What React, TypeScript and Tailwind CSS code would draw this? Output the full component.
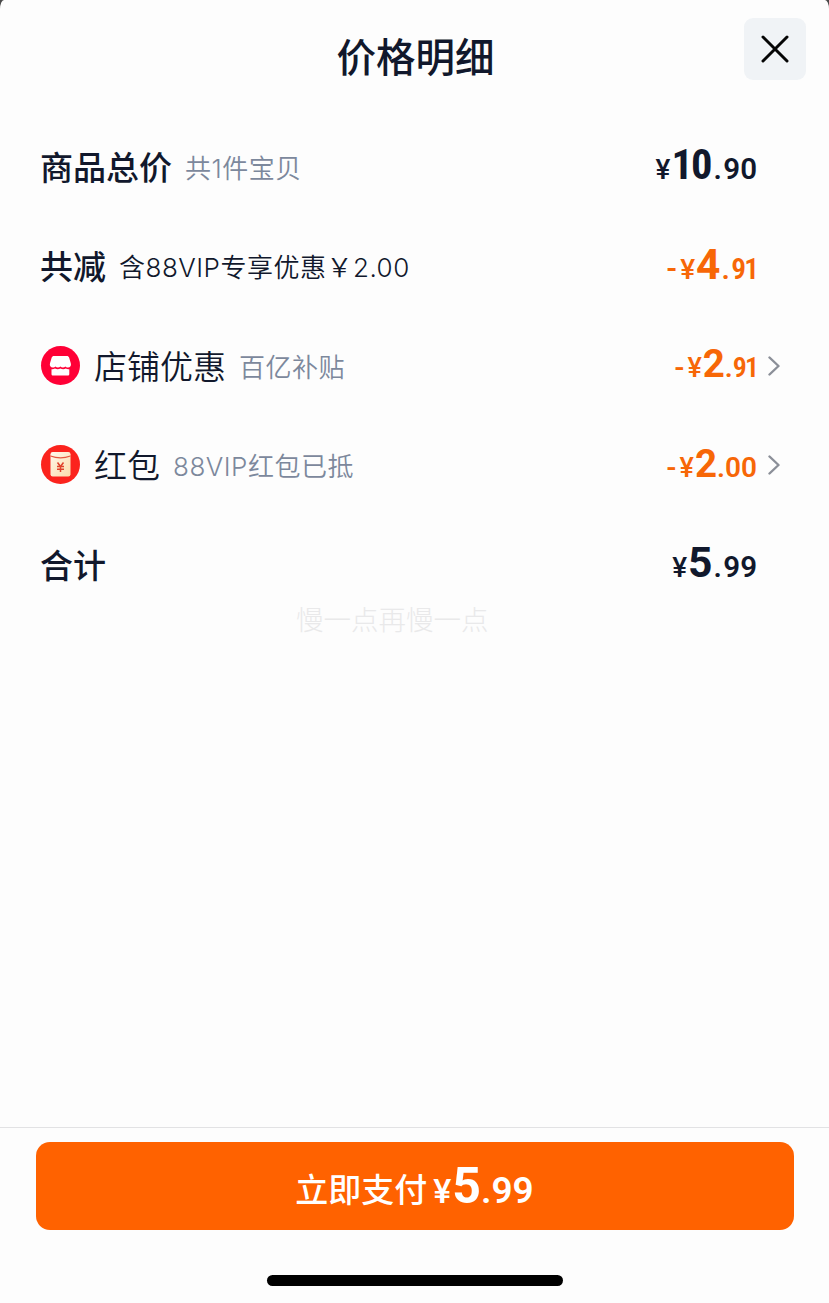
import clsx from "clsx";
import type { ReactNode } from "react";

type Tone = "ink" | "orange";

type PriceProps = {
  yuan: string;
  cents: string;
  negative?: boolean;
  size?: "sm" | "md" | "lg";
};

const SIZES = {
  sm: { yen: "text-[27px] mr-px", yuan: "text-[38.5px]", dot: "", cents: "text-[28px]" },
  md: { yen: "text-[28px] mr-px", yuan: "text-[42.5px]", dot: "ml-px mr-[1.5px]", cents: "text-[29.5px]" },
  lg: { yen: "text-[34px] mr-px", yuan: "text-[50px]", dot: "", cents: "text-[37px]" },
};

function Price({ yuan, cents, negative, size = "md" }: PriceProps) {
  const s = SIZES[size];
  const wide = yuan.startsWith("1");
  const tight = cents.endsWith("1");
  return (
    <span className="flex items-baseline font-[Roboto,sans-serif] leading-none whitespace-nowrap">
      {negative ? <span className={clsx("mr-[3px] font-semibold", s.cents)}>-</span> : null}
      <span className={clsx("font-medium", s.yen)}>¥</span>
      <span className={clsx("font-bold", wide && "mr-[2px] -tracking-[2px] font-stretch-semi-condensed", s.yuan)}>
        {yuan}
      </span>
      <span className={clsx("font-semibold", s.cents, s.dot)}>.</span>
      <span className={clsx("font-semibold", tight && "-tracking-[2px] font-stretch-semi-condensed", s.cents)}>
        {cents}
      </span>
    </span>
  );
}

type RowProps = {
  icon?: ReactNode;
  label: string;
  note?: string;
  noteDark?: boolean;
  bold?: boolean;
  arrow?: boolean;
  tone?: Tone;
  children: ReactNode;
};

function Row({ icon, label, note, noteDark, bold, arrow, tone = "ink", children }: RowProps) {
  return (
    <li className="flex h-[99.5px] items-center pr-12 pl-10">
      {icon ? <span className="mr-[14px] size-10">{icon}</span> : null}
      <span className={clsx("pb-px text-[33px] leading-none", bold ? "font-medium" : "font-[350]")}>{label}</span>
      {note ? (
        <span
          className={clsx(
            "ml-[13px] pt-1 font-[Inter,'Noto_Sans_CJK_SC',sans-serif] text-[26px] leading-none font-[350] tracking-[0.5px]",
            noteDark ? "text-[#11182c]" : "text-[#7c889c]",
          )}
        >
          {note}
        </span>
      ) : null}
      <span className={clsx("ml-auto pb-[3px]", tone === "orange" ? "text-[#f76707]" : "text-[#11182c]")}>
        {children}
      </span>
      <span className="ml-2.5 w-[14px]">{arrow ? <Chevron /> : null}</span>
    </li>
  );
}

function Chevron() {
  return (
    <svg className="h-[20px] w-[14px]" viewBox="0 0 14 20" fill="none" stroke="#8b8f98" strokeWidth="2.4">
      <path d="M2.500 1.500 11.500 10 2.500 18.500" strokeLinecap="round" strokeLinejoin="round" />
    </svg>
  );
}

function ShopIcon() {
  return (
    <svg className="size-10" viewBox="0 0 40 40">
      <circle cx="20.5" cy="19.5" r="19.5" fill="#ff0036" />
      <path
        d="M14 10h12.800c1.200 0 2 .6 2.300 1.600l1.700 5.600c.7 2.300-.6 4.300-2.800 4.300-1.200 0-2-.5-2.600-1.100-.7.7-1.500 1.100-2.500 1.100s-1.900-.4-2.500-1.100c-.7.7-1.500 1.100-2.500 1.100s-1.900-.4-2.500-1.100c-.6.6-1.400 1.100-2.600 1.100-2.200 0-3.500-2-2.800-4.300l1.700-5.600c.3-1 1.100-1.600 2.300-1.600z"
        fill="#fff"
      />
      <path
        d="M11.500 23.300c1.500.2 2.500-.1 3.500-.7 1.600 1 3.700 1 5.400 0 1.700 1 3.800 1 5.400 0 1 .6 2 .9 3.500.7v4.600c0 1.100-.6 1.700-1.700 1.700h-14.400c-1.100 0-1.700-.6-1.700-1.700z"
        fill="#fff"
      />
    </svg>
  );
}

function RedPacketIcon() {
  return (
    <svg className="size-10" viewBox="0 0 40 40">
      <defs>
        <linearGradient id="packet" x1="0" y1="0" x2="1" y2="1">
          <stop offset="0" stopColor="#fff8ec" />
          <stop offset="1" stopColor="#fbdcaa" />
        </linearGradient>
      </defs>
      <circle cx="20.5" cy="19.5" r="19.5" fill="#fb231d" />
      <rect x="10.500" y="7" width="20" height="24.500" rx="2.200" fill="url(#packet)" />
      <path d="M10.500 11q10 3.600 20 0" fill="none" stroke="#e5573f" strokeWidth="1.200" />
      <path
        d="M17.500 17.500l3 4 3-4M17 21.600h7M17 24.200h7M20.500 21.500v5.500"
        fill="none"
        stroke="#e0432d"
        strokeWidth="1.500"
      />
    </svg>
  );
}

export default function App() {
  return (
    <div className="bg-[#4a4a4a]">
      <main className="flex h-[1303px] flex-col rounded-t-[4px_9px] bg-[#fdfdfd] font-['Noto_Sans_CJK_SC',sans-serif] text-[#11182c]">
        <header className="relative flex h-[117px] shrink-0 justify-center pt-[35px] pl-[2px]">
          <h1 className="text-[39.5px] leading-none font-medium">价格明细</h1>
          <button
            aria-label="关闭"
            className="absolute top-[18px] right-[23px] flex size-[62px] items-center justify-center rounded-[9px] bg-[#f0f3f6]"
          >
            <svg className="size-[28px]" viewBox="0 0 28 28" stroke="#050505" strokeWidth="3" strokeLinecap="round">
              <path d="M2 2 26 26M26 2 2 26" />
            </svg>
          </button>
        </header>

        <ul>
          <Row label="商品总价" note="共1件宝贝" bold>
            <Price yuan="10" cents="90" />
          </Row>
          <Row label="共减" note="含88VIP专享优惠￥2.00" noteDark bold tone="orange">
            <Price yuan="4" cents="91" negative />
          </Row>
          <Row icon={<ShopIcon />} label="店铺优惠" note="百亿补贴" arrow tone="orange">
            <Price yuan="2" cents="91" negative size="sm" />
          </Row>
          <Row icon={<RedPacketIcon />} label="红包" note="88VIP红包已抵" arrow tone="orange">
            <Price yuan="2" cents="00" negative size="sm" />
          </Row>
          <Row label="合计" bold>
            <Price yuan="5" cents="99" />
          </Row>
        </ul>

        <p className="mt-[-10px] ml-[296px] text-[27.5px] leading-none font-light text-[#e9e9ea]">慢一点再慢一点</p>

        <footer className="mt-auto flex h-[176px] flex-col items-center border-t border-[#e2e2e4] pt-[14px]">
          <button className="flex h-[88px] w-[758px] items-center justify-center rounded-[14px] bg-[#ff6200] text-white">
            <span className="mr-1.5 pt-1 text-[33px] leading-none font-medium">立即支付</span>
            <Price yuan="5" cents="99" size="lg" />
          </button>
          <div className="mt-[45px] h-[11px] w-[296px] rounded-full bg-black" />
        </footer>
      </main>
    </div>
  );
}
